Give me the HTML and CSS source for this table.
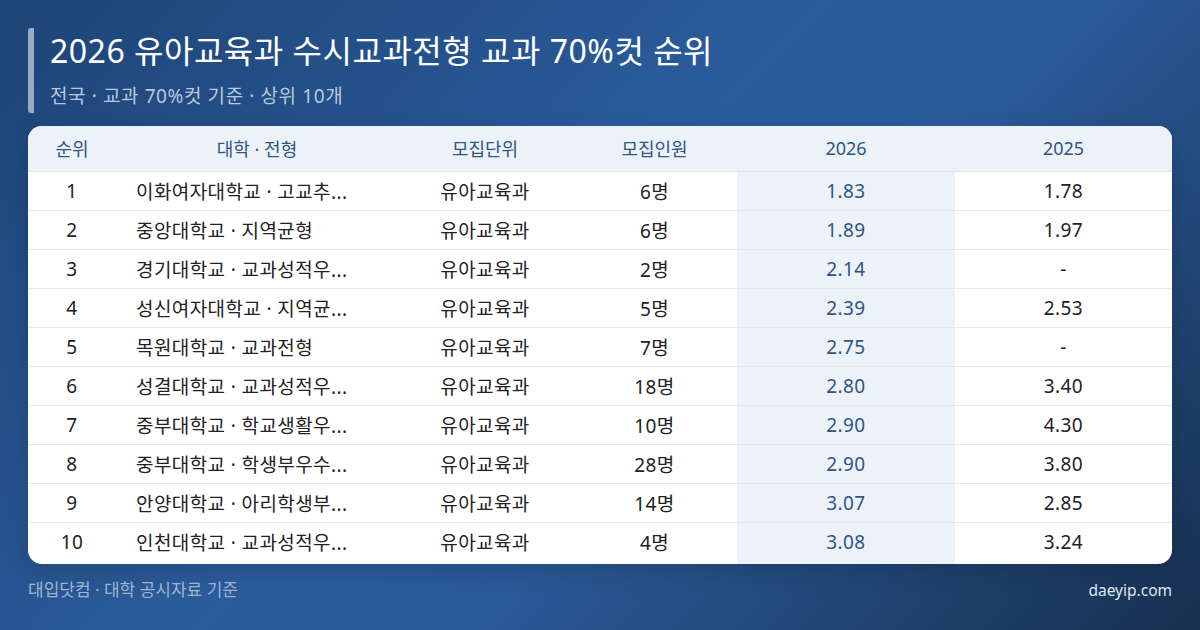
FILE: index.html
```html
<!DOCTYPE html>
<html lang="ko">
<head>
    <meta charset="UTF-8">
    <title>2026 유아교육과 수시교과전형 교과 70%컷 순위</title>
    <link rel="stylesheet" href="styles.css">
</head>
<body>
    <div class="page">
        <div class="heading">
            <h1>2026 유아교육과 수시교과전형 교과 70%컷 순위</h1>
            <p class="subtitle">전국 · 교과 70%컷 기준 · 상위 10개</p>
        </div>

        <div class="card">
            <table class="rank-table">
                <colgroup>
                    <col class="c-rank">
                    <col class="c-univ">
                    <col class="c-unit">
                    <col class="c-count">
                    <col class="c-now">
                    <col class="c-prev">
                </colgroup>
                <thead>
                    <tr>
                        <th>순위</th>
                        <th>대학 · 전형</th>
                        <th>모집단위</th>
                        <th>모집인원</th>
                        <th>2026</th>
                        <th>2025</th>
                    </tr>
                </thead>
                <tbody>
                    <tr><td>1</td><td class="univ">이화여자대학교 · 고교추...</td><td>유아교육과</td><td>6명</td><td class="now">1.83</td><td>1.78</td></tr>
                    <tr><td>2</td><td class="univ">중앙대학교 · 지역균형</td><td>유아교육과</td><td>6명</td><td class="now">1.89</td><td>1.97</td></tr>
                    <tr><td>3</td><td class="univ">경기대학교 · 교과성적우...</td><td>유아교육과</td><td>2명</td><td class="now">2.14</td><td>-</td></tr>
                    <tr><td>4</td><td class="univ">성신여자대학교 · 지역균...</td><td>유아교육과</td><td>5명</td><td class="now">2.39</td><td>2.53</td></tr>
                    <tr><td>5</td><td class="univ">목원대학교 · 교과전형</td><td>유아교육과</td><td>7명</td><td class="now">2.75</td><td>-</td></tr>
                    <tr><td>6</td><td class="univ">성결대학교 · 교과성적우...</td><td>유아교육과</td><td>18명</td><td class="now">2.80</td><td>3.40</td></tr>
                    <tr><td>7</td><td class="univ">중부대학교 · 학교생활우...</td><td>유아교육과</td><td>10명</td><td class="now">2.90</td><td>4.30</td></tr>
                    <tr><td>8</td><td class="univ">중부대학교 · 학생부우수...</td><td>유아교육과</td><td>28명</td><td class="now">2.90</td><td>3.80</td></tr>
                    <tr><td>9</td><td class="univ">안양대학교 · 아리학생부...</td><td>유아교육과</td><td>14명</td><td class="now">3.07</td><td>2.85</td></tr>
                    <tr><td>10</td><td class="univ">인천대학교 · 교과성적우...</td><td>유아교육과</td><td>4명</td><td class="now">3.08</td><td>3.24</td></tr>
                </tbody>
            </table>
        </div>

        <div class="footer">
            <span class="source">대입닷컴 · 대학 공시자료 기준</span>
            <span class="site">daeyip.com</span>
        </div>
    </div>
</body>
</html>
```

FILE: styles.css
```css
* {
    margin: 0;
    padding: 0;
    box-sizing: border-box;
}

body {
    width: 1200px;
    height: 630px;
    overflow: hidden;
    font-family: 'Noto Sans', 'Noto Sans CJK KR', sans-serif;
    background: linear-gradient(135deg, #1d4476 0%, #2b5c9c 45%, #2a5a98 60%, #173050 100%);
}

.page {
    padding: 28px 28px 0 28px;
}

.heading {
    border-left: 6px solid rgba(255,255,255,0.55);
    border-radius: 3px;
    padding-left: 16px;
    height: 85px;
}

h1 {
    color: #fff;
    font-size: 32px;
    font-weight: 400;
    line-height: 46px;
    letter-spacing: 0.5px;
}

.subtitle {
    color: #b9c8dd;
    font-size: 19px;
    line-height: 24px;
    margin-top: 10px;
    letter-spacing: 0.6px;
}

.card {
    margin-top: 13px;
    background: #fff;
    border-radius: 14px;
    overflow: hidden;
    box-shadow: 0 8px 24px rgba(0,0,0,0.15);
}

.rank-table {
    width: 1144px;
    border-collapse: collapse;
    table-layout: fixed;
}

.c-rank { width: 88px; }
.c-univ { width: 282px; }
.c-unit { width: 174px; }
.c-count { width: 165px; }
.c-now { width: 218px; }
.c-prev { width: 217px; }

.rank-table th {
    background: #edf2f9;
    color: #2d5586;
    font-size: 18px;
    font-weight: 400;
    height: 45px;
    text-align: center;
    border-bottom: 1px solid #dfe6ef;
}

.rank-table td {
    height: 39px;
    font-size: 19px;
    letter-spacing: 0.4px;
    color: #222;
    text-align: center;
    border-bottom: 1px solid #e3e9f1;
    white-space: nowrap;
}

.rank-table tbody tr:last-child td {
    border-bottom: none;
    height: 42px;
    padding-bottom: 3px;
}

.rank-table td.univ {
    text-align: left;
    padding-left: 20px;
}

.rank-table td.now {
    background: #edf2f9;
    color: #2d5586;
}

.footer {
    display: flex;
    justify-content: space-between;
    align-items: baseline;
    margin-top: 15px;
    line-height: 22px;
}

.source {
    color: #9fb4d0;
    font-size: 17px;
}

.site {
    color: #dfe7f2;
    font-size: 15.5px;
}
```
